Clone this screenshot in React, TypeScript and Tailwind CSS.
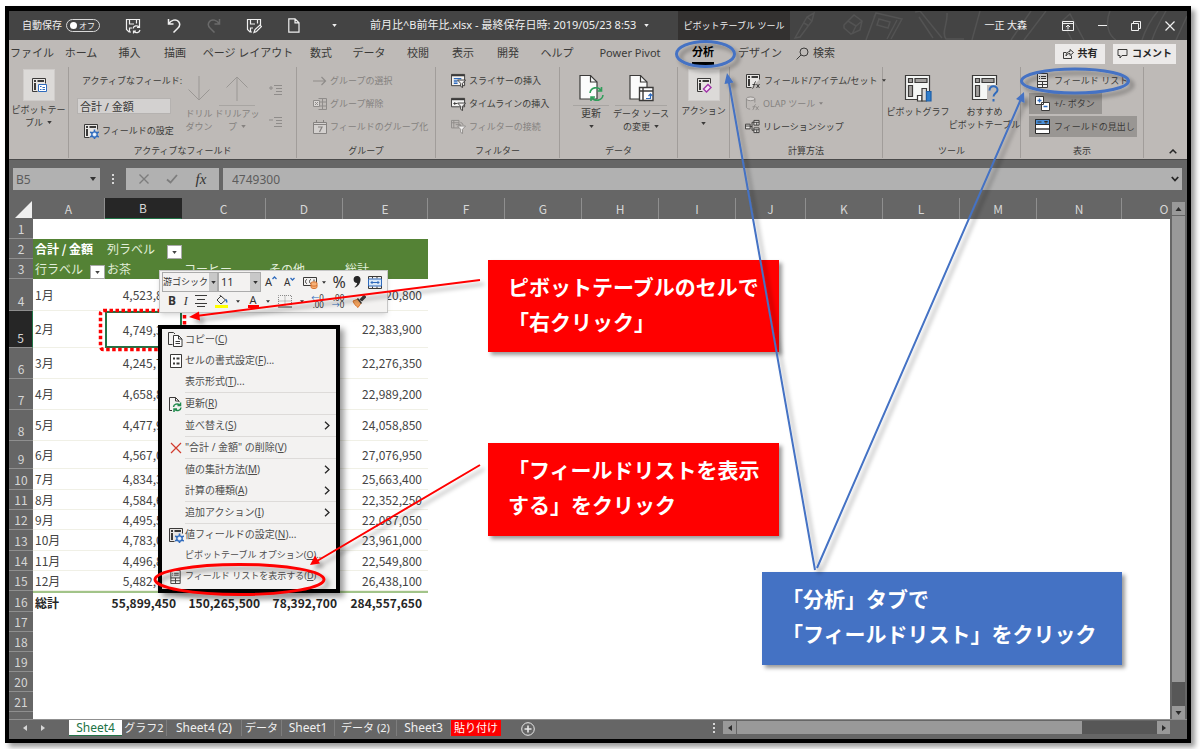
import type { ReactNode } from "react";

type IconProps = { className?: string };

const COLUMNS = [
  { name: "A", width: "w-[72px]" },
  { name: "B", width: "w-[77px]" },
  { name: "C", width: "w-[84px]" },
  { name: "D", width: "w-[77px]" },
  { name: "E", width: "w-[85px]" },
  { name: "F", width: "w-[77px]" },
  { name: "G", width: "w-[77px]" },
  { name: "H", width: "w-[77px]" },
  { name: "I", width: "w-[77px]" },
  { name: "J", width: "w-[70px]" },
  { name: "K", width: "w-[77px]" },
  { name: "L", width: "w-[77px]" },
  { name: "M", width: "w-[77px]" },
  { name: "N", width: "w-[85px]" },
  { name: "O", width: "w-[85px]" },
];

const MONTHS = [
  { row: 4, height: "h-8", label: "1月", tea: "4,523,800", total: "21,720,800" },
  { row: 5, height: "h-[37px]", label: "2月", tea: "4,749,300", total: "22,383,900" },
  { row: 6, height: "h-[31px]", label: "3月", tea: "4,245,700", total: "22,276,350" },
  { row: 7, height: "h-[31px]", label: "4月", tea: "4,658,800", total: "22,989,200" },
  { row: 8, height: "h-[31px]", label: "5月", tea: "4,477,900", total: "24,058,850" },
  { row: 9, height: "h-7", label: "6月", tea: "4,567,000", total: "27,076,950" },
  { row: 10, height: "h-[21px]", label: "7月", tea: "4,834,300", total: "25,663,400" },
  { row: 11, height: "h-5", label: "8月", tea: "4,584,600", total: "22,352,250" },
  { row: 12, height: "h-5", label: "9月", tea: "4,495,500", total: "22,087,050" },
  { row: 13, height: "h-[21px]", label: "10月", tea: "4,783,000", total: "23,961,000" },
  { row: 14, height: "h-5", label: "11月", tea: "4,496,800", total: "22,549,800" },
  { row: 15, height: "h-5", label: "12月", tea: "5,482,400", total: "26,438,100" },
];

const RIBBON_TABS = [
  { label: "ファイル", width: "w-[46px]" },
  { label: "ホーム", width: "w-[52px]" },
  { label: "挿入", width: "w-[45px]" },
  { label: "描画", width: "w-[46px]" },
  { label: "ページ レイアウト", width: "w-[100px]" },
  { label: "数式", width: "w-[46px]" },
  { label: "データ", width: "w-[50px]" },
  { label: "校閲", width: "w-[48px]" },
  { label: "表示", width: "w-[42px]" },
  { label: "開発", width: "w-[48px]" },
  { label: "ヘルプ", width: "w-[50px]" },
  { label: "Power Pivot", width: "w-[96px]" },
  { label: "分析", width: "w-[50px]", active: true },
  { label: "デザイン", width: "w-[64px]" },
];

const SHEETS = [
  { name: "グラフ2", width: "w-[45px]", size: "text-[11px]" },
  { name: "Sheet4 (2)", width: "w-[75px]", size: "text-xs" },
  { name: "データ", width: "w-10", size: "text-[11px]" },
  { name: "Sheet1", width: "w-[53px]", size: "text-xs" },
  { name: "データ (2)", width: "w-[62px]", size: "text-[11px]" },
  { name: "Sheet3", width: "w-[54px]", size: "text-xs" },
];

/* ---------- icons ---------- */

const Caret = ({ className = "w-[5px] h-[3px]" }: IconProps) => (
  <svg viewBox="0 0 6 4" className={`shrink-0 ${className}`} fill="currentColor" aria-hidden="true">
    <path d="M0 0h6L3 4z" />
  </svg>
);

const SaveIcon = ({ pen }: { pen?: boolean }) => (
  <svg viewBox="0 0 16 16" className="w-4 h-4" fill="none" stroke="#f0f0f0" strokeWidth="1.2" aria-hidden="true">
    <path d="M6 14H4L1.5 11.5V1.5H14.5V7M4.5 1.5V6H9M11.500 1.5V5.5M4.500 14V10H7" />
    {pen ? (
      <path d="M8 14.5l1-3 5-4.5 1.5 1.5-5 5z" />
    ) : (
      <path d="M8 10.5a3.5 3.5 0 0 1 6-1.5M14.5 7v2.5H12M15 12a3.5 3.5 0 0 1-6 1.5M8.5 15.5V13H11" />
    )}
  </svg>
);

const UndoIcon = ({ redo }: { redo?: boolean }) => (
  <svg
    viewBox="0 0 14 15"
    className={redo ? "w-[14px] h-[15px] -scale-x-100" : "w-[14px] h-[15px]"}
    fill="none"
    stroke={redo ? "#6a6a6a" : "#f0f0f0"}
    strokeWidth="1.5"
    aria-hidden="true"
  >
    <path d="M1.5 1v5H6.5M1.5 6C4 2 9 0.5 11.5 3.5C13.5 6 12.5 8.5 11 10L6.5 14.5" />
  </svg>
);

const PivotIcon = ({ className = "w-4 h-4", children }: IconProps & { children?: ReactNode }) => (
  <svg viewBox="0 0 16 16" className={`shrink-0 ${className}`} fill="none" stroke="#3b3a39" aria-hidden="true">
    <path d="M6.5 14.5H1.5V1.5H14.5V6.5" fill="#e8e6e4" />
    <path d="M3 4h2M6.5 4h6.5M4 6v7" strokeWidth="2" />
    {children}
  </svg>
);

const Gear = () => (
  <g stroke="#2f6bbd">
    <path d="M11.5 6.5v9.500M7.200 9l8.600 5M15.800 9l-8.600 5" strokeWidth="1.600" />
    <circle cx="11.5" cy="11.5" r="2.700" fill="#cfe0f5" strokeWidth="1.300" />
    <circle cx="11.5" cy="11.5" r="1" fill="#fff" stroke="none" />
  </g>
);

const Funnel = ({ stroke = "#3b3a39" }: { stroke?: string }) => (
  <path d="M7 7.500h8.500l-3.200 3.500v4.500l-2-1.300v-3.200z" fill="#f3f2f1" stroke={stroke} />
);

const ArrowRightIcon = () => (
  <svg viewBox="0 0 14 14" className="w-[14px] h-[14px] shrink-0" fill="none" stroke="#8f8c8a" strokeWidth="1.2" aria-hidden="true">
    <path d="M0 7h12.500M8.500 3l4 4-4 4" />
  </svg>
);

const UngroupIcon = () => (
  <svg viewBox="0 0 14 14" className="w-[14px] h-[14px] shrink-0" fill="none" stroke="#8f8c8a" aria-hidden="true">
    <path d="M5.500 1.500h8v11h-8M9.500 1.500v11M5.500 5h8M5.500 9h8" />
    <path d="M.5 3.500h6v6h-6zM2 5l3 3M5 5L2 8" fill="#d9d6d4" />
  </svg>
);

const CalendarIcon = () => (
  <svg viewBox="0 0 14 14" className="w-[14px] h-[14px] shrink-0" fill="none" stroke="#858280" aria-hidden="true">
    <path d="M.5 2.500h13v11H.5zM.5 4.500h13M3.500 0v3M10.500 0v3" fill="#d4d1cf" />
    <path d="M5 7h4l-2.500 5" strokeWidth="1.2" />
  </svg>
);

const SlicerIcon = () => (
  <svg viewBox="0 0 16 16" className="w-[15px] h-[15px] shrink-0" fill="none" stroke="#3b3a39" aria-hidden="true">
    <path d="M.5 1.500h14v12H.5z" fill="#f3f2f1" />
    <path d="M.5 2.500h14" strokeWidth="2" />
    <path d="M3 6h8M3 8.500h4M3 11h4" stroke="#2f6bbd" strokeWidth="1.5" />
    <Funnel />
  </svg>
);

const TimelineIcon = () => (
  <svg viewBox="0 0 16 16" className="w-[15px] h-[15px] shrink-0" fill="none" stroke="#3b3a39" aria-hidden="true">
    <path d="M.5 2.500h14v9H.5z" fill="#f3f2f1" />
    <path d="M.5 3.500h14" strokeWidth="2" />
    <path d="M2.500 8h4M4 6.500v3" />
    <Funnel />
  </svg>
);

const FilterLinkIcon = () => (
  <svg viewBox="0 0 16 16" className="w-[15px] h-[15px] shrink-0" fill="none" stroke="#8f8c8a" aria-hidden="true">
    <path d="M.5 1.500h8v8h-8zM.5 4h8M3 1.500v8M10 3.500a4 4 0 0 1 3 3M5 6h5v5" />
    <Funnel stroke="#8f8c8a" />
  </svg>
);

const DocIcon = ({ children }: { children?: ReactNode }) => (
  <svg viewBox="0 0 26 28" className="w-[26px] h-7 shrink-0" fill="none" stroke="#3b3a39" strokeWidth="1.2" aria-hidden="true">
    <path d="M2 1.500h10.500L19 8v17H2z" fill="#fbfbfb" />
    <path d="M12.500 1.500V8H19" />
    {children}
  </svg>
);

const DatabaseFxIcon = () => (
  <svg viewBox="0 0 16 16" className="w-[15px] h-[15px] shrink-0" fill="none" stroke="#8f8c8a" aria-hidden="true">
    <ellipse cx="6" cy="3" rx="4.5" ry="2" fill="#d9d6d4" />
    <path d="M1.500 3v9c0 1 2 2 4 2M10.500 3v4" />
    <path d="M8 15c1.500 0 1.500-6 3.500-6M8 11.500h3M11.500 11l3 4M14.500 11l-3 4" />
  </svg>
);

const RelationIcon = () => (
  <svg viewBox="0 0 16 16" className="w-[15px] h-[15px] shrink-0" fill="none" stroke="#3b3a39" aria-hidden="true">
    <path d="M.5 5.500h5v5h-5zM9.500 1.500h5.500v5H9.500zM9.500 9.500h5.500v5H9.500z" fill="#e8e6e4" />
    <path d="M5.500 8h2V3.500h2M7.500 8v4h2M9.500 3.500h5.500M9.500 11.500h5.500M12.500 3.500v3M12.500 11.500v3M.5 7.500h5" />
  </svg>
);

const BigPivotIcon = ({ help }: { help?: boolean }) => (
  <svg viewBox="0 0 28 28" className="w-7 h-7 shrink-0" fill="none" stroke="#3b3a39" strokeWidth="1.2" aria-hidden="true">
    <path d="M1.500 1.500h24v24h-24z" fill="#f5f7f5" />
    <path d="M4.500 4.500h4v4h-4zM11 4.500h12v4H11zM4.500 11.500h4v11h-4z" fill="#a3a19f" />
    {help ? (
      <>
        <path d="M16 11h12v17H16z" fill="#bebab7" stroke="none" />
        <path d="M18.500 16.500c0-6 8-5 8-.5 0 3-4 3-4 6.500M22.500 25v2.500" stroke="#2f6bbd" strokeWidth="2" />
      </>
    ) : (
      <>
        <path d="M13.500 21.500h4.500v5.500h-4.500z" fill="#fff" />
        <path d="M18 14.500h4.500V27H18z" fill="#d9d9d9" />
        <path d="M22.500 17.500h4.500V27h-4.500z" fill="#2f7ecb" stroke="#1f5fa8" />
      </>
    )}
  </svg>
);

const FieldListIcon = ({ className = "w-[11px] h-[15px]" }: IconProps) => (
  <svg viewBox="0 0 11 15" className={`shrink-0 ${className}`} fill="none" stroke="#3b3a39" aria-hidden="true">
    <path d="M.5.5h10v14H.5z" fill="#f3f2f1" />
    <path d="M.5 8.500h10M.5 11.500h10M5.500 8.500v6M2 3.500h1M2 5.500h1M4 3.500h5M4 5.500h5" />
  </svg>
);

const PlusMinusIcon = () => (
  <svg viewBox="0 0 15 15" className="w-[15px] h-[15px] shrink-0" fill="#fff" stroke="#3b3a39" aria-hidden="true">
    <path d="M.5.5h8v8h-8zM6.500 6.500h8v8h-8z" />
    <path d="M2.500 4.500h4M4.500 2.500v4M8.500 10.500h4" stroke="#2f6bbd" strokeWidth="1.3" />
  </svg>
);

const HeaderIcon = () => (
  <svg viewBox="0 0 15 15" className="w-[15px] h-[15px] shrink-0" fill="#fff" stroke="#2b2b2b" aria-hidden="true">
    <path d="M.5.5h14v14H.5z" />
    <path d="M.5.5h14v5H.5z" fill="#4a8fd8" />
    <path d="M.5 10h14" strokeWidth="1.4" />
    <path d="M2.500 3h4M9.500 2.500h3l-1.500 2z" />
  </svg>
);

const CopyIcon = () => (
  <svg viewBox="0 0 15 15" className="w-[15px] h-[15px]" fill="none" stroke="#3b3a39" aria-hidden="true">
    <path d="M4.500 12.500H.5V.5h5L7 2" />
    <path d="M5.500 3.500h5l3.500 3.500v7.500H5.500zM10.500 3.500V7H14M7.500 9.500h4.500M7.500 11.500h4.500" fill="#fff" />
  </svg>
);

const FormatCellIcon = () => (
  <svg viewBox="0 0 12 14" className="w-3 h-[14px]" fill="#fff" stroke="#3b3a39" aria-hidden="true">
    <path d="M.5.5h11v13H.5z" />
    <path d="M3 4.500h2M6.500 4.500h3M3 9.500h2M6.500 9.500h3" strokeWidth="2" />
  </svg>
);

const RefreshDocIcon = () => (
  <svg viewBox="0 0 15 15" className="w-[15px] h-[15px]" fill="none" stroke="#3b3a39" aria-hidden="true">
    <path d="M4 13.500H1.500V.5h6L11 4v1M7.500.5V4H11" />
    <path d="M5.500 10a3.500 3.500 0 0 1 6-2M12.500 5.500v3h-3M13 10.500a3.500 3.500 0 0 1-6 2M6 15v-3h3" stroke="#1f8a4c" strokeWidth="1.5" />
  </svg>
);

const DeleteIcon = () => (
  <svg viewBox="0 0 12 12" className="w-3 h-3" fill="none" stroke="#d13b2e" strokeWidth="1.2" aria-hidden="true">
    <path d="M1 1l10 10M11 1L1 11" />
  </svg>
);

const SettingIcon = () => (
  <PivotIcon>
    <Gear />
  </PivotIcon>
);

/* ---------- title bar ---------- */

const TitleBar = () => (
  <header className="flex h-[29px] shrink-0 items-center bg-[#444444] text-[10px] text-[#f0f0f0]">
    <label className="flex w-[108px] shrink-0 items-center gap-1 pl-[13px] whitespace-nowrap">
      自動保存
      <input type="checkbox" className="sr-only" />
      <span className="flex h-[13px] w-[34px] shrink-0 items-center justify-between rounded-full border border-[#d8d8d8] pr-1 pl-[3px] text-[8px]">
        <span className="h-[7px] w-[7px] shrink-0 rounded-full bg-white" />
        オフ
      </span>
    </label>
    <div className="flex w-[253px] shrink-0 items-center">
      <button aria-label="上書き保存" className="flex w-[34px] justify-center pr-[2px]">
        <SaveIcon />
      </button>
      <button aria-label="元に戻す" className="ml-[3px] flex w-10 justify-center">
        <UndoIcon />
      </button>
      <button aria-label="やり直し" className="flex w-10 justify-center">
        <UndoIcon redo />
      </button>
      <button aria-label="名前を付けて保存" className="flex w-10 justify-center">
        <SaveIcon pen />
      </button>
      <button aria-label="新規" className="flex w-10 justify-center">
        <svg viewBox="0 0 12 15" className="w-3 h-[15px]" fill="none" stroke="#f0f0f0" strokeWidth="1.2" aria-hidden="true">
          <path d="M.8.8h6.200l4 4v9.400H.8zM7 .8v4h4" />
        </svg>
      </button>
      <button aria-label="ツール バーの設定" className="flex w-10 justify-center">
        <Caret />
      </button>
    </div>
    <h1 className="flex w-[308px] shrink-0 items-center gap-2 text-[11px] whitespace-nowrap">
      前月比^B前年比.xlsx - 最終保存日時: 2019/05/23 8:53
      <Caret />
    </h1>
    <div className="flex w-28 shrink-0 items-center justify-center self-stretch bg-[#333130] text-[9px] whitespace-nowrap">
      ピボットテーブル ツール
    </div>
    <div className="relative flex flex-1 items-center justify-end self-stretch overflow-hidden">
      <svg viewBox="0 0 397 29" className="absolute inset-0 h-full w-full" preserveAspectRatio="none" fill="none" stroke="#535353" strokeWidth="1.5" aria-hidden="true">
        <path d="M5 27L17 6l7-4-2 8L10 26zM17 6l5 4M14 12l5 3M54 14l10-10 8 6-2 9-9 4-7-6zM58 10l8 5 6-5M66 15l-4 8M76 29L86 2l26 6-11 20M86 2l-2 4M89 8l11 3-2 6-11-3zM107 9l-10 19M125 1l5-1 22 27M129 6l14 21M157 2c1 10-6 20-1 26h18M182 29L190 0M221 29l20-29M234 29l22-29M272 10l8-7 14 26M282 29l-10-19M320 0c-6 15 0 25 6 29M352 29c4-12 10-22 16-29M362 29c4-12 10-22 14-29M386 29l11-24" />
      </svg>
      <span className="relative mr-6 whitespace-nowrap">一正 大森</span>
      <div className="relative flex items-center">
        <button aria-label="リボンの表示オプション" className="flex w-[34px] justify-center">
          <svg viewBox="0 0 12 10" className="w-3 h-[10px]" fill="none" stroke="#f0f0f0" aria-hidden="true">
            <path d="M.5.500h11v9H.5zM.5 2.500h11M6 8.500v-4M4 6l2-2 2 2" />
          </svg>
        </button>
        <button aria-label="最小化" className="flex w-[34px] justify-center">
          <span className="h-px w-[9px] bg-[#f0f0f0]" />
        </button>
        <button aria-label="元に戻す (縮小)" className="flex w-[34px] justify-center">
          <svg viewBox="0 0 10 10" className="w-[10px] h-[10px]" fill="none" stroke="#f0f0f0" aria-hidden="true">
            <path d="M.5 2.500h7v7h-7zM2.500 2.500v-2h7v7h-2" />
          </svg>
        </button>
        <button aria-label="閉じる" className="flex w-[34px] justify-center">
          <svg viewBox="0 0 10 10" className="w-[10px] h-[10px]" fill="none" stroke="#f0f0f0" strokeWidth="1.2" aria-hidden="true">
            <path d="M.5.500l9 9M9.500.500l-9 9" />
          </svg>
        </button>
      </div>
    </div>
  </header>
);

/* ---------- ribbon ---------- */

const RibbonTabs = () => (
  <nav className="flex h-[27px] items-center text-[11px] whitespace-nowrap">
    {RIBBON_TABS.map((tab) => (
      <button key={tab.label} className={`flex shrink-0 flex-col items-center ${tab.width}`}>
        {tab.active ? (
          <span className="border-b-[3px] border-black leading-5 font-bold text-black">{tab.label}</span>
        ) : (
          tab.label
        )}
      </button>
    ))}
    <button className="flex shrink-0 items-center gap-1 pl-1">
      <svg viewBox="0 0 13 13" className="w-[13px] h-[13px]" fill="none" stroke="#3b3a39" aria-hidden="true">
        <circle cx="8" cy="5" r="4" />
        <path d="M5 8l-4.500 4.500" />
      </svg>
      検索
    </button>
    <div className="ml-auto flex gap-2 pr-[11px] text-[10px] font-bold text-[#262626]">
      <button className="flex h-5 w-[50px] items-center justify-center gap-1 bg-[#eceae9]">
        <svg viewBox="0 0 11 11" className="w-[11px] h-[11px]" fill="none" stroke="#3b3a39" aria-hidden="true">
          <path d="M3.500 4.500h-3v6h8v-3M3 8c0-3 2-4.500 4-4.500v-2l3.500 3-3.500 3v-2C5.500 5.500 4 6 3 8z" />
        </svg>
        共有
      </button>
      <button className="flex h-5 w-[63px] items-center justify-center gap-1 bg-[#eceae9]">
        <svg viewBox="0 0 11 11" className="w-[11px] h-[11px]" fill="none" stroke="#3b3a39" aria-hidden="true">
          <path d="M1 1.500h9v6H5l-2 2.500v-2.500H1z" />
        </svg>
        コメント
      </button>
    </div>
  </nav>
);

const Group = ({ title, width, children }: { title?: string; width: string; children: ReactNode }) => (
  <section className={`flex shrink-0 flex-col border-r border-[#a19d9a] ${width}`}>
    <div className="flex h-[77px]">{children}</div>
    {title && <h2 className="text-center">{title}</h2>}
  </section>
);

const Command = ({ icon, label, disabled, caret }: { icon: ReactNode; label: string; disabled?: boolean; caret?: boolean }) => (
  <button disabled={disabled} className="flex h-[23px] items-center gap-[3px] disabled:text-[#858280]">
    {icon}
    {label}
    {caret && <Caret className="ml-px w-[4px] h-[3px]" />}
  </button>
);

const Ribbon = () => (
  <div className="shrink-0 border-b border-[#4a4a4a] bg-[#bebab7] text-[#3b3a39]">
    <RibbonTabs />
    <div className="mb-px flex h-[91px] text-[9px] leading-[13px] whitespace-nowrap">
      <Group width="w-[60px]">
        <button className="flex w-full flex-col items-center pt-[2px]">
          <span className="mb-[2px] flex h-8 w-8 items-center justify-center border border-[#cfccca] bg-[#dcdad8]">
            <PivotIcon>
              <path d="M7.500 7.500h8v7h-8z" fill="#fff" stroke="#2f6bbd" />
              <path d="M9 9.500h1.500M11.500 10.500h2.500M9 12.500h1.500M11.500 12.500h2.500" stroke="#2f6bbd" />
            </PivotIcon>
          </span>
          ピボットテー
          <span className="flex items-center gap-1">
            ブル
            <Caret />
          </span>
        </button>
      </Group>

      <Group title="アクティブなフィールド" width="w-[228px]">
        <div className="flex w-[116px] flex-col items-start pl-2">
          <label htmlFor="active-field" className="pt-[7px] pl-[5px]">
            アクティブなフィールド:
          </label>
          <input
            id="active-field"
            defaultValue="合計 / 金額"
            className="mt-[11px] h-4 w-[94px] border border-[#b5b2b0] bg-[#d3d1d0] px-[2px] text-[11px]"
          />
          <div className="mt-[5px] pl-[6px]">
            <Command icon={<SettingIcon />} label="フィールドの設定" />
          </div>
        </div>
        <button disabled className="flex w-7 flex-col items-center pt-[9px] text-[#858280]">
          <svg viewBox="0 0 22 25" className="mb-[6px] h-[25px] w-[22px]" fill="none" stroke="#9a9794" aria-hidden="true">
            <path d="M11 0v24M.5 13.500L11 24l10.500-10.500" />
          </svg>
          ドリル
          <br />
          ダウン
        </button>
        <button disabled className="flex w-12 flex-col items-center pt-[9px] text-[#858280]">
          <svg viewBox="0 0 22 25" className="h-[25px] w-[22px]" fill="none" stroke="#9a9794" aria-hidden="true">
            <path d="M11 25V1M.5 11.500L11 1l10.500 10.500" />
          </svg>
          <span className="mt-1 mb-px h-px w-9 bg-[#a8a5a2]" />
          ドリルアッ
          <span className="flex items-center gap-1">
            プ
            <Caret />
          </span>
        </button>
        <div className="flex flex-col gap-5 pt-[17px] pl-2">
          {["M0 4h4M2 2v4", "M0 4h4"].map((d) => (
            <button key={d} disabled aria-label="フィールドの展開/折りたたみ">
              <svg viewBox="0 0 13 12" className="h-3 w-[13px]" fill="none" stroke="#8f8c8a" aria-hidden="true">
                <path d={`${d}M5 1.500h8M7 4.500h6M7 7.500h6M5 10.500h8`} />
              </svg>
            </button>
          ))}
        </div>
      </Group>

      <Group title="グループ" width="w-[139px]">
        <div className="flex flex-col pt-[2px] pl-4">
          <Command disabled icon={<ArrowRightIcon />} label="グループの選択" />
          <Command disabled icon={<UngroupIcon />} label="グループ解除" />
          <Command disabled icon={<CalendarIcon />} label="フィールドのグループ化" />
        </div>
      </Group>

      <Group title="フィルター" width="w-[124px]">
        <div className="flex flex-col pt-[2px] pl-[15px]">
          <Command icon={<SlicerIcon />} label="スライサーの挿入" />
          <Command icon={<TimelineIcon />} label="タイムラインの挿入" />
          <Command disabled icon={<FilterLinkIcon />} label="フィルターの接続" />
        </div>
      </Group>

      <Group title="データ" width="w-[118px]">
        <button className="ml-3 flex w-[38px] flex-col items-center pt-[7px]">
          <DocIcon>
            <path d="M12 19a6 6 0 0 1 11-2.500M23.500 13v4h-4M25 21a6 6 0 0 1-11 2.500M13 27v-4h4" stroke="#2f9e5a" strokeWidth="1.6" />
          </DocIcon>
          <span className="mt-[3px] mb-px h-px w-9 bg-[#a8a5a2]" />
          <span className="text-[10px]">更新</span>
          <Caret className="mt-[5px] w-[5px] h-[3px]" />
        </button>
        <button className="flex w-[62px] flex-col items-center pt-[7px]">
          <DocIcon>
            <path d="M11.500 13.500h13.500V26.500H11.500zM11.500 17h13.500M15 13.500v13" fill="#fff" strokeWidth="1.4" />
            <path d="M18 24.500h4.500V20M20.500 22l2-2.200 2 2.200" stroke="#2f6bbd" />
          </DocIcon>
          <span className="mt-[3px] mb-px h-px w-[52px] bg-[#a8a5a2]" />
          データ ソース
          <span className="flex items-center gap-1">
            の変更
            <Caret />
          </span>
        </button>
      </Group>

      <Group width="w-[52px]">
        <button className="flex w-full flex-col items-center pt-[2px]">
          <span className="mb-[3px] flex h-8 w-8 items-center justify-center border border-[#cfccca] bg-[#dcdad8]">
            <PivotIcon>
              <path d="M7.500 12l4.500-4.500 3 3L10.500 15z" fill="#f6e8f8" stroke="#a033a8" strokeWidth="1.4" />
            </PivotIcon>
          </span>
          アクション
          <Caret className="mt-[5px] w-[5px] h-[3px]" />
        </button>
      </Group>

      <Group title="計算方法" width="w-[153px]">
        <div className="flex flex-col pt-[2px] pl-[15px]">
          <Command
            icon={
              <PivotIcon>
                <path d="M7.500 15.500c1.500 0 1.500-7 3.500-7M7.500 11.500h3M11.500 11l3 4M14.500 11l-3 4" />
              </PivotIcon>
            }
            label="フィールド/アイテム/セット"
            caret
          />
          <Command disabled icon={<DatabaseFxIcon />} label="OLAP ツール" caret />
          <Command icon={<RelationIcon />} label="リレーションシップ" />
        </div>
      </Group>

      <Group title="ツール" width="w-[138px]">
        <button className="flex w-[66px] flex-col items-center pt-[7px] pl-1">
          <BigPivotIcon />
          <span className="mt-[3px]">ピボットグラフ</span>
        </button>
        <button className="flex w-[71px] flex-col items-center pt-[7px]">
          <BigPivotIcon help />
          <span className="mt-[3px]">おすすめ</span>
          ピボットテーブル
        </button>
      </Group>

      <Group title="表示" width="w-[123px]">
        <div className="flex flex-col items-start gap-[2px] pt-[3px] pl-2">
          <button className="flex h-[21px] items-center gap-[6px] pl-2">
            <FieldListIcon />
            フィールド リスト
          </button>
          <button className="flex h-[21px] items-center gap-1 bg-[#999693] pr-[7px] pl-[6px]">
            <PlusMinusIcon />
            <span>+/- ボタン</span>
          </button>
          <button className="flex h-[21px] items-center gap-1 bg-[#999693] pr-[2px] pl-[6px]">
            <HeaderIcon />
            フィールドの見出し
          </button>
        </div>
      </Group>

      <button aria-label="リボンを折りたたむ" className="ml-auto flex w-7 items-end justify-center pb-1">
        <svg viewBox="0 0 8 5" className="w-2 h-[5px]" fill="none" stroke="#262626" strokeWidth="1.5" aria-hidden="true">
          <path d="M.7 4.300L4 1l3.300 3.300" />
        </svg>
      </button>
    </div>
  </div>
);

/* ---------- formula bar ---------- */

const Dots = () => (
  <span className="flex flex-col gap-[2px]">
    <span className="h-[2px] w-[2px] bg-[#d8d8d8]" />
    <span className="h-[2px] w-[2px] bg-[#d8d8d8]" />
    <span className="h-[2px] w-[2px] bg-[#d8d8d8]" />
  </span>
);

const FormulaBar = () => (
  <div className="flex h-[38px] shrink-0 items-start bg-[#666666] pt-2 pr-[5px] pl-1 text-xs text-[#5c5c5c]">
    <div className="flex h-[22px] w-[87px] items-center bg-[#b1b1b1] pr-1">
      <input aria-label="名前ボックス" defaultValue="B5" className="h-full w-full min-w-0 pl-[3px]" />
      <Caret className="w-[6px] h-[4px] text-[#333333]" />
    </div>
    <div className="flex h-[22px] w-[26px] items-center justify-center">
      <Dots />
    </div>
    <div className="mr-1 flex h-[22px] w-[93px] items-center justify-around bg-[#b1b1b1] px-1">
      <button aria-label="キャンセル">
        <svg viewBox="0 0 10 10" className="w-[10px] h-[10px]" fill="none" stroke="#7d7d7d" strokeWidth="1.4" aria-hidden="true">
          <path d="M.5.500l9 9M9.500.500l-9 9" />
        </svg>
      </button>
      <button aria-label="入力">
        <svg viewBox="0 0 12 10" className="w-3 h-[10px]" fill="none" stroke="#7d7d7d" strokeWidth="1.8" aria-hidden="true">
          <path d="M1 5.500l3.500 3L11 1" />
        </svg>
      </button>
      <button className="font-['Liberation_Serif',serif] text-[15px] leading-5 text-[#333333] italic">fx</button>
    </div>
    <div className="flex h-[22px] flex-1 items-center bg-[#b1b1b1] pr-[3px]">
      <input aria-label="数式バー" defaultValue="4749300" className="h-full flex-1 pl-[9px]" />
      <svg viewBox="0 0 8 6" className="w-2 h-[6px]" fill="none" stroke="#262626" strokeWidth="1.8" aria-hidden="true">
        <path d="M.8 1L4 4.500 7.200 1" />
      </svg>
    </div>
  </div>
);

/* ---------- worksheet ---------- */

const RowHead = ({ n, active }: { n: number | string; active?: boolean }) => (
  <th
    scope="row"
    className={`border-b border-[#8f8f8f] p-0 text-center align-bottom leading-[18px] font-normal ${
      active ? "border-r border-r-[#217346] bg-[#262626] text-[#d6d6d6]" : "bg-[#666666] text-[#d6d6d6]"
    }`}
  >
    {n}
  </th>
);

const FilterButton = ({ label }: { label: string }) => (
  <button aria-label={label} className="flex h-[14px] w-[15px] shrink-0 items-center justify-center self-end border border-[#a9a9a9] bg-white text-[#444444]">
    <Caret />
  </button>
);

const Blank = ({ from }: { from: number }) => (
  <>
    {COLUMNS.slice(from).map((c) => (
      <td key={c.name} />
    ))}
  </>
);

const Sheet = () => (
  <div className="min-w-0 flex-1 overflow-hidden bg-white">
    <table className="w-0 table-fixed border-separate border-spacing-0 font-['Noto_Sans_CJK_JP',sans-serif] text-xs leading-[18px] text-[#444444]">
      <colgroup>
        <col className="w-6" />
        {COLUMNS.map((c) => (
          <col key={c.name} className={c.width} />
        ))}
      </colgroup>
      <thead>
        <tr className="h-[21px] bg-[#666666] text-[#d6d6d6]">
          <th className="p-0 align-bottom">
            <svg viewBox="0 0 24 20" className="h-5 w-6" fill="#f0f0f0" aria-hidden="true">
              <path d="M23 2v17H6z" />
            </svg>
          </th>
          {COLUMNS.map((c) => (
            <th
              key={c.name}
              scope="col"
              className={`border-r p-0 text-center font-normal ${
                c.name === "B" ? "border-b border-[#262626] border-b-[#217346] bg-[#262626]" : "border-[#8f8f8f]"
              }`}
            >
              {c.name}
            </th>
          ))}
        </tr>
      </thead>
      <tbody>
        <tr className="h-5">
          <RowHead n={1} />
          <Blank from={0} />
        </tr>
        <tr className="h-5">
          <RowHead n={2} />
          <td className="bg-[#548235] p-0 pl-[2px] font-bold whitespace-nowrap text-white">合計 / 金額</td>
          <td className="bg-[#548235] p-0 pl-[2px] text-[#e2efda]">
            <div className="flex h-5 items-center justify-between whitespace-nowrap">
              列ラベル
              <FilterButton label="列ラベルの絞り込み" />
            </div>
          </td>
          <td colSpan={3} className="bg-[#548235] p-0" />
          <Blank from={5} />
        </tr>
        <tr className="h-5 text-[#e2efda]">
          <RowHead n={3} />
          <td className="bg-[#548235] p-0 pl-[2px]">
            <div className="flex h-5 items-center justify-between whitespace-nowrap">
              行ラベル
              <FilterButton label="行ラベルの絞り込み" />
            </div>
          </td>
          <td className="bg-[#548235] p-0 pl-[2px]">お茶</td>
          <td className="bg-[#548235] p-0 pl-[2px]">コーヒー</td>
          <td className="bg-[#548235] p-0 pl-[3px]">その他</td>
          <td className="bg-[#548235] p-0 pl-[2px]">総計</td>
          <Blank from={5} />
        </tr>
        {MONTHS.map((m) => (
          <tr key={m.row} className={m.height}>
            <RowHead n={m.row} active={m.row === 5} />
            <td className="border-b border-[#f0f0e6] p-0 pl-[2px]">{m.label}</td>
            <td
              className={
                m.row === 5
                  ? "border-2 border-[#217346] p-0 pr-1 text-right"
                  : "border-b border-[#f0f0e6] p-0 pr-[6px] text-right"
              }
            >
              {m.tea}
            </td>
            <td className="border-b border-[#f0f0e6] p-0" />
            <td className="border-b border-[#f0f0e6] p-0" />
            <td className="border-b border-[#f0f0e6] p-0 pr-[6px] text-right">{m.total}</td>
            <Blank from={5} />
          </tr>
        ))}
        <tr className="h-[21px] font-bold text-[#262626]">
          <RowHead n={16} />
          <td className="border-t-2 border-[#a2c489] p-0 pl-[2px]">総計</td>
          {["55,899,450", "150,265,500", "78,392,700", "284,557,650"].map((v) => (
            <td key={v} className="border-t-2 border-[#a2c489] p-0 pr-[6px] text-right">
              {v}
            </td>
          ))}
          <Blank from={5} />
        </tr>
        {[17, 18, 19, 20, 21, 22].map((n) => (
          <tr key={n} className="h-5">
            <RowHead n={n === 22 ? "" : n} />
            <Blank from={0} />
          </tr>
        ))}
      </tbody>
    </table>
  </div>
);

const VerticalScroll = () => (
  <div className="flex w-[17px] shrink-0 flex-col items-center bg-[#666666] px-[2px] pt-1 text-[#2b2b2b]">
    <button aria-label="上へ" className="flex h-[13px] w-full items-center justify-center bg-[#999999]">
      <Caret className="w-[7px] h-[4px] rotate-180" />
    </button>
    <div className="mt-px flex w-full flex-1 flex-col bg-[#575757] pb-6">
      <div className="w-full flex-1 bg-[#999999]" />
    </div>
    <button aria-label="下へ" className="flex h-[13px] w-full items-center justify-center bg-[#999999]">
      <Caret className="w-[7px] h-[4px]" />
    </button>
  </div>
);

const SheetBar = () => (
  <footer className="flex h-5 shrink-0 items-start border-t border-[#8f8f8f] bg-[#666666] whitespace-nowrap text-[#f0f0f0]">
    <div className="flex h-4 w-[60px] items-center gap-3 pl-[13px] text-[#d6d6d6]">
      <button aria-label="前のシート">
        <Caret className="w-[6px] h-[4px] rotate-90" />
      </button>
      <button aria-label="次のシート">
        <Caret className="w-[6px] h-[4px] -rotate-90" />
      </button>
    </div>
    <button className="h-4 w-[53px] border-b border-[#217346] bg-white text-xs leading-[15px] text-[#217346]">Sheet4</button>
    {SHEETS.map((s) => (
      <button key={s.name} className={`h-4 border-r border-[#7d7d7d] leading-4 ${s.width} ${s.size}`}>
        {s.name}
      </button>
    ))}
    <button className="h-4 w-[50px] bg-[#ff0000] text-[11px] leading-4 text-white">貼り付け</button>
    <button aria-label="新しいシート" className="ml-5 pt-[2px]">
      <svg viewBox="0 0 14 14" className="w-[14px] h-[14px]" fill="none" stroke="#e8e8e8" aria-hidden="true">
        <circle cx="7" cy="7" r="6.300" />
        <path d="M3.500 7h7M7 3.500v7" strokeWidth="1.6" />
      </svg>
    </button>
    <div className="ml-auto flex h-[15px] w-[477px] items-center pr-[17px] text-[#2b2b2b]">
      <span className="mr-2 ml-[3px]">
        <Dots />
      </span>
      <button aria-label="左へ" className="flex h-[13px] w-[13px] items-center justify-center bg-[#999999]">
        <Caret className="w-[6px] h-[4px] rotate-90" />
      </button>
      <div className="ml-px flex h-[13px] flex-1 bg-[#575757] pr-[75px]">
        <div className="h-full flex-1 bg-[#999999]" />
      </div>
      <button aria-label="右へ" className="flex h-[13px] w-[13px] items-center justify-center bg-[#999999]">
        <Caret className="w-[6px] h-[4px] -rotate-90" />
      </button>
    </div>
  </footer>
);

/* ---------- floating tool bar and context menu ---------- */

const MiniToolbar = () => (
  <div
    role="toolbar"
    className="absolute top-[270px] left-[159px] flex h-[43px] w-[229px] flex-col border border-[#c6c6c6] bg-[#f3f2f1] pt-px pl-[2px] text-[#333333] shadow-md"
  >
    <div className="flex h-5 items-center">
      <button className="flex h-full w-14 items-center justify-between border border-[#ababab] text-[9px] whitespace-nowrap">
        游ゴシック
        <span className="flex h-full w-2 items-center justify-center bg-[#c8c8c8]">
          <Caret />
        </span>
      </button>
      <button className="flex h-full w-[43px] items-center justify-between border border-[#ababab] pl-[2px] text-[11px]">
        11
        <span className="flex h-full w-[10px] items-center justify-center bg-[#c8c8c8]">
          <Caret />
        </span>
      </button>
      <div className="flex flex-1 items-center justify-between pr-[5px] pl-1">
        <button aria-label="フォント サイズの拡大" className="flex text-[11px]">
          A
          <svg viewBox="0 0 5 4" className="mt-[2px] h-1 w-[5px]" fill="none" stroke="#2f6bbd" strokeWidth="1.3" aria-hidden="true">
            <path d="M.5 3L2.500 1l2 2" />
          </svg>
        </button>
        <button aria-label="フォント サイズの縮小" className="flex text-[10px]">
          A
          <svg viewBox="0 0 5 4" className="mt-[2px] h-1 w-[5px]" fill="none" stroke="#2f6bbd" strokeWidth="1.3" aria-hidden="true">
            <path d="M.5 1l2 2 2-2" />
          </svg>
        </button>
        <button aria-label="通貨表示形式" className="flex items-center gap-1">
          <svg viewBox="0 0 15 13" className="h-[13px] w-[15px]" fill="none" stroke="#3b3a39" aria-hidden="true">
            <path d="M.5 1.500h13v8H.5zM4 3.500c-2 0-2 4 0 4M8 3.500c-2 0-2 4 0 4M11 3.500v2" />
            <path d="M8 7v4c0 2 6 2 6 0V7c0-1.500-6-1.500-6 0M8 9c0 1.500 6 1.500 6 0" fill="#f5b27a" stroke="#d9722c" />
          </svg>
          <Caret className="w-[4px] h-[3px]" />
        </button>
        <button aria-label="パーセント スタイル" className="text-base leading-5">%</button>
        <button aria-label="桁区切りスタイル">
          <svg viewBox="0 0 8 12" className="h-3 w-2" fill="#262626" aria-hidden="true">
            <path d="M4 0a3.200 3.200 0 0 1 3.500 3.500C7.500 7.500 5 10.500 2 11.500L1.500 11C3 10 4 8.500 4.200 7A3.400 3.400 0 0 1 4 0z" />
          </svg>
        </button>
        <button aria-label="セルを結合して中央揃え">
          <svg viewBox="0 0 14 13" className="h-[13px] w-[14px]" fill="none" stroke="#3b3a39" aria-hidden="true">
            <path d="M.5.500h13v12H.5zM4.500.500v2M9 .5v2M4.500 10.500v2M9 10.500v2" />
            <path d="M.5 3h13v7H.5z" fill="#dbe9f8" stroke="#2f6bbd" />
            <path d="M3 6.500h8M4.500 5L3 6.500 4.500 8M9.500 5L11 6.500 9.500 8" stroke="#2f6bbd" />
          </svg>
        </button>
      </div>
    </div>
    <div className="flex h-[18px] w-[204px] items-center justify-between pl-[6px] text-xs leading-4">
      <button className="font-bold" aria-label="太字">B</button>
      <button className="font-['Liberation_Serif',serif] italic" aria-label="斜体">I</button>
      <button aria-label="中央揃え">
        <svg viewBox="0 0 12 12" className="h-3 w-3" fill="none" stroke="#3b3a39" aria-hidden="true">
          <path d="M0 .5h12M2 4.500h8M0 8.500h12M2 11.500h8" />
        </svg>
      </button>
      <button aria-label="塗りつぶしの色">
        <svg viewBox="0 0 13 14" className="h-[14px] w-[13px]" fill="none" stroke="#3b3a39" aria-hidden="true">
          <path d="M2 6l4-4 4.500 4L6 10zM5 1l1 2" />
          <path d="M10.500 5.500c1 .5 1.500 1.500 1 3" stroke="#2f6bbd" strokeWidth="1.5" />
          <path d="M0 12.500h13" stroke="#ffff00" strokeWidth="3" />
        </svg>
      </button>
      <Caret className="w-[4px] h-[3px]" />
      <button aria-label="フォントの色" className="border-b-[3px] border-[#ff0000] px-[2px] text-[11px] leading-[11px]">A</button>
      <Caret className="w-[4px] h-[3px]" />
      <button aria-label="罫線">
        <svg viewBox="0 0 14 13" className="h-[13px] w-[14px]" fill="none" stroke="#8a8a8a" strokeDasharray="1 1" aria-hidden="true">
          <path d="M.5 11V.5h13V11M7 .5V11M.5 6h13" />
          <path d="M0 12h14" stroke="#3b3a39" strokeDasharray="none" />
        </svg>
      </button>
      <Caret className="w-[4px] h-[3px]" />
      <button aria-label="小数点以下の表示桁数を増やす" className="flex flex-col items-end text-[8px] leading-[7px]">
        <span><span className="text-[#2f6bbd]">←</span>0</span>
        .00
      </button>
      <button aria-label="小数点以下の表示桁数を減らす" className="flex flex-col items-end text-[8px] leading-[7px]">
        .00
        <span><span className="text-[#2f6bbd]">→</span>0</span>
      </button>
      <button aria-label="書式のコピー/貼り付け">
        <svg viewBox="0 0 14 13" className="h-[13px] w-[14px]" fill="none" stroke="#3b3a39" aria-hidden="true">
          <path d="M1 6l5-2 3 4-3 4.500C4 11 2 9 1 6z" fill="#f2a35e" stroke="#d9722c" />
          <path d="M5.500 3.500L9.500 8.500M8 5l4-4.500L13.500 2 9.500 6" fill="#3b3a39" strokeWidth="1.4" />
        </svg>
      </button>
    </div>
  </div>
);

type MenuItem = { label: string; hotkey: string; tail?: string; icon?: ReactNode; sub?: boolean; line?: boolean; small?: boolean };

const MENU: MenuItem[] = [
  { label: "コピー", hotkey: "C", icon: <CopyIcon /> },
  { label: "セルの書式設定", hotkey: "F", tail: "...", icon: <FormatCellIcon /> },
  { label: "表示形式", hotkey: "T", tail: "...", line: true },
  { label: "更新", hotkey: "R", icon: <RefreshDocIcon />, line: true },
  { label: "並べ替え", hotkey: "S", sub: true, line: true },
  { label: '"合計 / 金額" の削除', hotkey: "V", icon: <DeleteIcon />, line: true },
  { label: "値の集計方法", hotkey: "M", sub: true },
  { label: "計算の種類", hotkey: "A", sub: true, line: true },
  { label: "追加アクション", hotkey: "I", sub: true, line: true },
  { label: "値フィールドの設定", hotkey: "N", tail: "...", icon: <SettingIcon /> },
  { label: "ピボットテーブル オプション", hotkey: "O", tail: "...", small: true },
  { label: "フィールド リストを表示する", hotkey: "D", icon: <FieldListIcon className="w-[11px] h-[14px]" />, small: true },
];

const ContextMenu = () => (
  <ul
    role="menu"
    className="absolute top-[325px] left-[158px] w-[182px] border-4 border-black bg-[#f3f2f1] pb-[2px] text-[10px] whitespace-nowrap text-[#4d4d4d] shadow-[4px_4px_6px_rgba(0,0,0,0.4)]"
  >
    {MENU.map((item) => (
      <li key={item.label} role="none" className="flex items-stretch">
        <span className="flex w-[23px] shrink-0 items-center justify-center pl-1">{item.icon}</span>
        <button
          role="menuitem"
          className={`flex flex-1 items-center justify-between border-b pr-[6px] text-left ${
            item.line ? "h-[22px] border-[#dddbd9]" : "h-[21px] border-transparent"
          } ${item.small ? "text-[9px]" : ""}`}
        >
          <span>
            {item.label}(<u>{item.hotkey}</u>){item.tail}
          </span>
          {item.sub && (
            <svg viewBox="0 0 6 9" className="w-[6px] h-[9px] shrink-0" fill="none" stroke="#262626" strokeWidth="1.3" aria-hidden="true">
              <path d="M1 .7l4 3.800-4 3.800" />
            </svg>
          )}
        </button>
      </li>
    ))}
  </ul>
);

/* ---------- annotations ---------- */

const Callout = ({ className, children }: { className: string; children: ReactNode }) => (
  <p
    className={`absolute pt-[10px] pl-5 text-[21px] leading-[35px] font-bold whitespace-nowrap text-white shadow-[3px_3px_4px_rgba(0,0,0,0.4)] ${className}`}
  >
    {children}
  </p>
);

const Annotations = () => (
  <svg viewBox="0 0 1200 749" className="pointer-events-none absolute top-0 left-0 h-[749px] w-[1200px]" fill="none" aria-hidden="true">
    <defs>
      <filter id="shade" x="-10%" y="-10%" width="120%" height="130%">
        <feDropShadow dx="4" dy="4" stdDeviation="2" floodColor="#000" floodOpacity="0.35" />
      </filter>
    </defs>
    <g filter="url(#shade)" stroke="#4472c4">
      <ellipse cx="705.5" cy="54" rx="29" ry="12.5" strokeWidth="3" />
      <ellipse cx="1075" cy="81" rx="53.5" ry="12" strokeWidth="3" />
      <path d="M815 570L728.500 80M817 568L1021 99" strokeWidth="2" />
      <path d="M727 73l6.500 9.500-9 1.500zM1024 92l.5 11-8.500-4z" fill="#4472c4" stroke="none" />
    </g>
    <g filter="url(#shade)" stroke="#ff0000">
      <ellipse cx="239.5" cy="579.5" rx="84.5" ry="15" strokeWidth="3" />
      <path d="M480 280L196 316M480 465L317 561" strokeWidth="2" />
      <path d="M189 317l10-5.500 1 9zM310 565l5-9.500 5 8z" fill="#ff0000" stroke="none" />
    </g>
  </svg>
);

export default function App() {
  return (
    <div className="relative flex h-screen min-h-[400px] w-full overflow-hidden bg-white pt-[6px] pr-[9px] pb-[6px] pl-[5px] font-['Noto_Sans','Noto_Sans_CJK_JP',sans-serif]">
      <main className="flex min-w-0 flex-1 flex-col overflow-hidden border-4 border-t-[5px] border-black bg-[#666666] shadow-[4px_4px_5px_rgba(0,0,0,0.4)]">
        <TitleBar />
        <Ribbon />
        <FormulaBar />
        <div className="flex min-h-0 flex-1">
          <Sheet />
          <VerticalScroll />
        </div>
        <SheetBar />
      </main>

      <svg viewBox="0 0 90 44" className="pointer-events-none absolute top-[308px] left-[98px] h-11 w-[90px]" fill="none" aria-hidden="true">
        <rect x="2.5" y="2.5" width="84" height="39" rx="3" stroke="#ff0000" strokeWidth="3.5" strokeDasharray="3.5 2.5" />
      </svg>
      <MiniToolbar />
      <ContextMenu />
      <Callout className="top-[260px] left-[488px] h-[92px] w-[291px] bg-[#ff0000]">
        ピボットテーブルのセルで
        <br />
        「右クリック」
      </Callout>
      <Callout className="top-[443px] left-[488px] h-[93px] w-[291px] bg-[#ff0000]">
        「フィールドリストを表示
        <br />
        する」をクリック
      </Callout>
      <Callout className="top-[572px] left-[762px] h-[93px] w-[360px] bg-[#4472c4]">
        「分析」タブで
        <br />
        「フィールドリスト」をクリック
      </Callout>
      <Annotations />
    </div>
  );
}
